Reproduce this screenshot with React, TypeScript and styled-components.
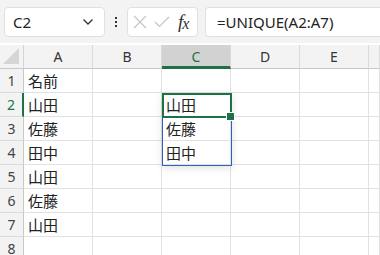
import React from "react";
import styled, { createGlobalStyle } from "styled-components";

const GlobalStyle = createGlobalStyle`
  html, body {
    margin: 0;
    padding: 0;
    background: #f3f3f3;
    overflow: hidden;
  }
`;

const COLS = ["A", "B", "C", "D", "E", ""];
const ROWS = 8;
const COL_W = 69;

const data: Record<string, string> = {
  A1: "名前",
  A2: "山田",
  A3: "佐藤",
  A4: "田中",
  A5: "山田",
  A6: "佐藤",
  A7: "山田",
  C2: "山田",
  C3: "佐藤",
  C4: "田中",
};

export default function App() {
  return (
    <Page>
      <GlobalStyle />
      <Toolbar>
        <NameBox>
          <span>C2</span>
          <svg width="12" height="8" viewBox="0 0 12 8">
            <path d="M1.5 1.5 L6 6 L10.5 1.5" fill="none" stroke="#333" strokeWidth="1.3" />
          </svg>
        </NameBox>
        <Dots>
          <i />
          <i />
          <i />
        </Dots>
        <ActionBox>
          <svg width="14" height="14" viewBox="0 0 14 14">
            <path d="M1 1 L13 13 M13 1 L1 13" stroke="#c4c4c4" strokeWidth="1.1" />
          </svg>
          <svg width="16" height="12" viewBox="0 0 16 12">
            <path d="M1 6 L5.5 10.5 L15 1" fill="none" stroke="#c4c4c4" strokeWidth="1.1" />
          </svg>
          <Fx>
            f<sub>x</sub>
          </Fx>
        </ActionBox>
        <FormulaBox>=UNIQUE(A2:A7)</FormulaBox>
      </Toolbar>
      <Sheet>
        <Corner>
          <svg width="18" height="18" viewBox="0 0 18 18">
            <path d="M17 1 L17 17 L1 17 Z" fill="#d6d6d6" />
          </svg>
        </Corner>
        {COLS.map((c) => (
          <ColHeader key={c || "F"} $active={c === "C"}>
            {c}
          </ColHeader>
        ))}
        {Array.from({ length: ROWS }, (_, i) => i + 1).map((r) => (
          <React.Fragment key={r}>
            <RowHeader $active={r === 2}>{r}</RowHeader>
            {COLS.map((c) => (
              <Cell key={c + r}>{c ? data[c + r] : ""}</Cell>
            ))}
          </React.Fragment>
        ))}
        <SpillRange />
        <ActiveCell>
          <Handle />
        </ActiveCell>
      </Sheet>
    </Page>
  );
}

const Page = styled.div`
  width: 380px;
  height: 255px;
  background: #f3f3f3;
  font-family: "Noto Sans", "Noto Sans CJK JP", sans-serif;
  overflow: hidden;
`;

const Toolbar = styled.div`
  height: 43px;
  box-sizing: border-box;
  padding: 7px 0 0 4px;
  display: flex;
  align-items: flex-start;
`;

const Box = styled.div`
  height: 30px;
  box-sizing: border-box;
  background: #fff;
  border: 1px solid #e0e0e0;
  border-radius: 4px;
  display: flex;
  align-items: center;
`;

const NameBox = styled(Box)`
  width: 101px;
  padding: 0 10px 0 8px;
  justify-content: space-between;
  font-size: 15px;
  color: #222;
`;

const Dots = styled.div`
  width: 22px;
  height: 30px;
  display: flex;
  flex-direction: column;
  align-items: center;
  justify-content: center;
  gap: 2px;
  i {
    width: 2px;
    height: 2px;
    background: #333;
  }
`;

const ActionBox = styled(Box)`
  width: 71px;
  padding: 0 4px 0 5px;
  gap: 7px;
`;

const Fx = styled.span`
  font-family: "Liberation Serif", "DejaVu Serif", serif;
  font-style: italic;
  font-size: 19px;
  color: #333;
  margin-left: 1px;
  letter-spacing: -1px;
  sub {
    font-size: 16px;
    vertical-align: -1px;
  }
`;

const FormulaBox = styled(Box)`
  margin-left: 7px;
  flex: 1;
  border-right: none;
  border-radius: 4px 0 0 4px;
  padding-left: 11px;
  font-size: 15px;
  color: #222;
`;

const Sheet = styled.div`
  position: relative;
  display: grid;
  grid-template-columns: 24px repeat(5, ${COL_W}px) 1fr;
  grid-template-rows: 26px repeat(${ROWS}, 24px);
  background: #fff;
`;

const Corner = styled.div`
  background: #f3f3f3;
  border-right: 1px solid #d4d4d4;
  border-bottom: 1px solid #c8c8c8;
  display: flex;
  align-items: flex-end;
  justify-content: flex-end;
  padding: 0 3px 3px 0;
  margin-top: 2px;
  svg {
    display: block;
  }
`;

const ColHeader = styled.div<{ $active?: boolean }>`
  margin-top: 2px;
  background: ${(p) => (p.$active ? "#d2d2d2" : "#f3f3f3")};
  border-right: 1px solid #dadada;
  border-bottom: ${(p) => (p.$active ? "3px solid #1e7145" : "1px solid #c8c8c8")};
  display: flex;
  align-items: center;
  justify-content: center;
  font-size: 14px;
  color: ${(p) => (p.$active ? "#1e7145" : "#333")};
  padding-top: ${(p) => (p.$active ? "2px" : "0")};
`;

const RowHeader = styled.div<{ $active?: boolean }>`
  background: #f3f3f3;
  border-right: ${(p) => (p.$active ? "2px solid #1e7145" : "1px solid #c8c8c8")};
  border-bottom: 1px solid #dadada;
  display: flex;
  align-items: center;
  justify-content: center;
  font-size: 14px;
  color: ${(p) => (p.$active ? "#1e7145" : "#444")};
`;

const Cell = styled.div`
  border-right: 1px solid #e1e1e1;
  border-bottom: 1px solid #e1e1e1;
  display: flex;
  align-items: center;
  padding-left: 4px;
  font-family: "Noto Sans CJK JP", sans-serif;
  font-size: 15px;
  color: #222;
  overflow: hidden;
  white-space: nowrap;
`;

const SpillRange = styled.div`
  position: absolute;
  left: 162px;
  top: 50px;
  width: 70px;
  height: 73px;
  box-sizing: border-box;
  border: 1px solid #2b62c2;
  box-shadow: 0 2px 8px rgba(0, 0, 0, 0.12);
  pointer-events: none;
`;

const ActiveCell = styled.div`
  position: absolute;
  left: 162px;
  top: 50px;
  width: 70px;
  height: 25px;
  box-sizing: border-box;
  border: 2px solid #1e7145;
  pointer-events: none;
`;

const Handle = styled.div`
  position: absolute;
  right: -5px;
  bottom: -5px;
  width: 7px;
  height: 7px;
  background: #1e7145;
  border: 1px solid #fff;
`;
